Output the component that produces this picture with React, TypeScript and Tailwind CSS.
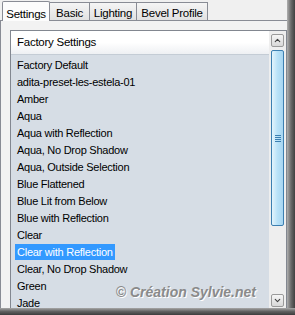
import { ChevronUp, ChevronDown } from 'lucide-react'

const presets = [
  'Factory Default',
  'adita-preset-les-estela-01',
  'Amber',
  'Aqua',
  'Aqua with Reflection',
  'Aqua, No Drop Shadow',
  'Aqua, Outside Selection',
  'Blue Flattened',
  'Blue Lit from Below',
  'Blue with Reflection',
  'Clear',
  'Clear with Reflection',
  'Clear, No Drop Shadow',
  'Green',
  'Jade',
]

const tabs = [
  { label: 'Basic', w: 'w-[40px]' },
  { label: 'Lighting', w: 'w-[47px]' },
  { label: 'Bevel Profile', w: 'w-[71px]' },
]

export default function App() {
  return (
    <div className="flex h-[315px] w-[295px] flex-col overflow-hidden bg-[#f0f0f0] font-['Liberation_Sans',sans-serif] text-[11px] tracking-[-0.25px] text-black">
      <div className="flex h-[308px] shrink-0">
        <div className="flex w-[287px] flex-col">
          {/* tabs */}
          <div className="flex h-[20px] shrink-0 items-end pl-[2px]">
            <div className="z-10 -mb-px flex h-[20px] w-[48px] items-start justify-center rounded-t-[2px] border border-b-0 border-[#898c95] bg-[#fcfcfc] pt-[4px] text-[11.5px]">
              Settings
            </div>
            {tabs.map((t) => (
              <div
                key={t.label}
                className={`flex h-[18px] items-start justify-center border border-b-0 border-l-0 border-[#898c95] bg-gradient-to-b from-[#f5f5f5] to-[#e1e1e1] pt-[2px] text-[11.5px] ${t.w}`}
              >
                {t.label}
              </div>
            ))}
          </div>
          {/* panel */}
          <div className="flex min-h-0 flex-1 flex-col border-t border-l border-[#898c95] bg-[#f2f2f2] pt-[9px] pl-[9px]">
            <div className="flex min-h-0 flex-1 border border-r-0 border-b-0 border-[#828790] bg-[#d6dde5]">
              <div className="flex min-w-0 flex-1 flex-col overflow-hidden">
                <div className="flex h-[24px] shrink-0 items-center border-b border-[#c4ccd5] bg-gradient-to-b from-white via-white to-[#eef0f3] pl-[6px] text-[11.5px]">
                  Factory Settings
                </div>
                <div className="flex flex-col pt-[1px] pl-[4px]">
                  {presets.map((p) => (
                    <div key={p} className="flex h-[17px] shrink-0 items-center">
                      <span
                        className={
                          p === 'Clear with Reflection'
                            ? 'bg-[#3399ff] px-[2px] leading-[16px] text-white'
                            : 'px-[2px] leading-[16px]'
                        }
                      >
                        {p}
                      </span>
                    </div>
                  ))}
                </div>
              </div>
              {/* scrollbar */}
              <div className="flex w-[18px] flex-col items-center border-r border-[#828790] bg-[#eeeeee] pt-[3px] pb-[1px]">
                <div className="flex h-[13px] w-[13px] items-center justify-center rounded-[2px] border border-[#9a9a9a] bg-gradient-to-b from-[#f6f6f6] to-[#d8d8d8]">
                  <ChevronUp size={9} strokeWidth={3} className="text-[#404040]" />
                </div>
                <div className="mt-[3px] flex h-[176px] w-[13px] flex-col items-center justify-center gap-[1px] rounded-[2px] border border-[#3c7fb1] bg-gradient-to-r from-[#e3f4fc] via-[#b9e2f8] to-[#a6d5f1]">
                  <div className="h-px w-[6px] bg-[#3c7fb1]" />
                  <div className="h-px w-[6px] bg-[#3c7fb1]" />
                  <div className="h-px w-[6px] bg-[#3c7fb1]" />
                  <div className="h-px w-[6px] bg-[#3c7fb1]" />
                </div>
                <div className="flex-1" />
                <div className="flex h-[13px] w-[13px] items-center justify-center rounded-[2px] border border-[#9a9a9a] bg-gradient-to-b from-[#f6f6f6] to-[#d8d8d8]">
                  <ChevronDown size={9} strokeWidth={3} className="text-[#404040]" />
                </div>
              </div>
            </div>
          </div>
        </div>
        <div className="w-[8px] bg-gradient-to-r from-[#b0b0b0] via-[#6a6a6a] to-[#404040]" />
      </div>
      <div className="relative h-[7px] shrink-0 bg-gradient-to-b from-[#a8a8a8] via-[#606060] to-[#3c3c3c]">
        <span className="absolute right-[39px] bottom-[12px] text-[14px] font-bold tracking-normal italic whitespace-nowrap text-[#8a8a8a] [text-shadow:1px_1px_0_#ffffff]">
          © Création Sylvie.net
        </span>
      </div>
    </div>
  )
}
